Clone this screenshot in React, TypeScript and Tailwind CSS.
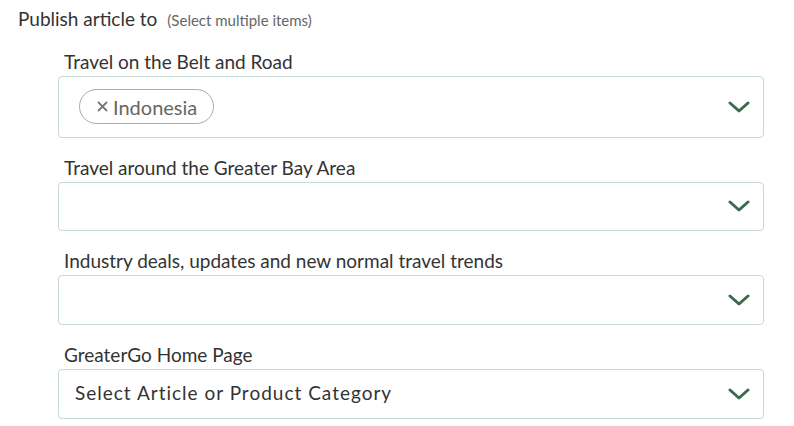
import React from "react";

function Chevron() {
  return (
    <svg width="22" height="12" viewBox="0 0 22 12" fill="none" className="shrink-0">
      <path d="M2 2 L11 10 L20 2" stroke="#3b6b4d" strokeWidth="3" strokeLinecap="round" strokeLinejoin="round" />
    </svg>
  );
}

function Field({ label, height, children }: { label: string; height: string; children?: React.ReactNode }) {
  return (
    <div className="flex flex-col">
      <div className="text-[19px] leading-[22px] text-[#333] pl-[6px] mb-[3px]">{label}</div>
      <div className={`flex items-center justify-between border border-[#c5d8d1] rounded-[4px] pl-[20px] pr-[13px] ${height}`}>
        <div className="flex items-center">{children}</div>
        <Chevron />
      </div>
    </div>
  );
}

export default function App() {
  return (
    <div className="bg-white w-[794px] h-[426px] overflow-hidden pl-[18px] pr-[30px] pt-[8px]" style={{ fontFamily: "Lato, 'Noto Sans', sans-serif" }}>
      <div className="flex items-baseline text-[#333]">
        <span className="text-[19px] leading-[22px]">Publish article to</span>
        <span className="text-[15px] text-[#666] ml-[10px]">(Select multiple items)</span>
      </div>
      <div className="ml-[40px] mt-[19px] flex flex-col gap-[19px]">
        <Field label="Travel on the Belt and Road" height="h-[62px]">
          <div className="flex items-center h-[35px] rounded-full border border-[#aaa] pl-[17px] pr-[16px] text-[20px] text-[#666]">
            <svg width="11" height="11" viewBox="0 0 11 11" className="mr-[5px]">
              <path d="M1 1 L10 10 M10 1 L1 10" stroke="#777" strokeWidth="1.8" />
            </svg>
            <span>Indonesia</span>
          </div>
        </Field>
        <Field label="Travel around the Greater Bay Area" height="h-[49px]" />
        <Field label="Industry deals, updates and new normal travel trends" height="h-[50px]" />
        <Field label="GreaterGo Home Page" height="h-[50px]">
          <span className="text-[19px] text-[#333] tracking-[1px] -ml-[4px]">Select Article or Product Category</span>
        </Field>
      </div>
    </div>
  );
}
